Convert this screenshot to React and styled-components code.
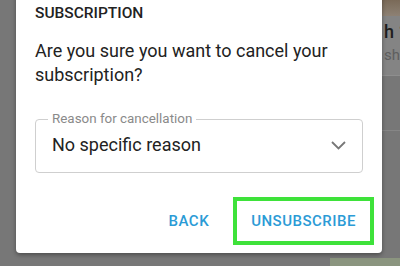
import React from 'react';
import styled, { createGlobalStyle } from 'styled-components';

const GlobalStyle = createGlobalStyle`
  html, body {
    margin: 0;
    padding: 0;
    background: #777777;
  }
  * {
    box-sizing: border-box;
  }
`;

const Screen = styled.div`
  position: relative;
  width: 400px;
  height: 266px;
  overflow: hidden;
  background: #777777;
  font-family: Roboto, 'Liberation Sans', sans-serif;
`;

// dimmed page behind the dialog
const Page = styled.div`
  display: flex;
  flex-direction: column;
  height: 100%;
`;

const PageTop = styled.div`
  flex: 1;
  display: flex;
`;

const Feed = styled.div`
  flex: 1;
`;

const SideList = styled.div`
  width: 18px;
  display: flex;
  flex-direction: column;
  overflow: hidden;
`;

const Thumb = styled.div`
  height: 16px;
  background: linear-gradient(180deg, #7a6a58, #8d8174);
`;

const ItemCard = styled.div`
  height: 60px;
  background: #848484;
  border-bottom: 1px solid #8e8e8e;
  padding: 6px 0 0 2px;
  white-space: nowrap;
`;

const ItemTitle = styled.div`
  font-size: 18px;
  font-weight: 500;
  color: #1e1e1e;
  line-height: 20px;
`;

const ItemSub = styled.div`
  margin-top: 4px;
  font-size: 15px;
  color: #5e5e5e;
  line-height: 18px;
`;

const ItemBlock = styled.div`
  height: 55px;
  border-bottom: 1px solid #868686;
`;

const BottomStrip = styled.div`
  margin-left: 330px;
  height: 8px;
  background: #8b957f;
`;

const Dialog = styled.div`
  position: absolute;
  left: 16px;
  top: -8px;
  width: 366px;
  background: #ffffff;
  border-radius: 4px;
  box-shadow: 0 2px 4px rgba(0, 0, 0, 0.35);
  padding: 11px 0 8px;
`;

const Content = styled.div`
  padding: 0 19px;
`;

const Title = styled.h2`
  margin: 0;
  font-size: 15.5px;
  line-height: 20px;
  font-weight: 500;
  color: #222222;
`;

const Message = styled.p`
  margin: 16px 0 0;
  font-size: 18px;
  line-height: 24px;
  color: #222222;
`;

const Field = styled.fieldset`
  margin: 24px 0 0;
  padding: 0 16px;
  border: 1px solid #cfcfcf;
  border-radius: 4px;
  min-width: 0;
`;

const Legend = styled.legend`
  margin-left: -4px;
  padding: 0 4px;
  font-size: 13.4px;
  line-height: 16px;
  color: #8a8a8a;
`;

const SelectRow = styled.div`
  height: 36px;
  margin-bottom: 9px;
  display: flex;
  align-items: center;
  justify-content: space-between;
`;

const Value = styled.span`
  font-size: 18px;
  line-height: 24px;
  color: #222222;
`;

const Actions = styled.div`
  margin-top: 24px;
  padding: 0 8px;
  display: flex;
  justify-content: flex-end;
  align-items: center;
  gap: ${(p) => p.$gap}px;
`;

const TextButton = styled.button`
  height: 48px;
  padding: 0 ${(p) => (p.$highlight ? '14px' : '8px')};
  background: none;
  border: ${(p) => (p.$highlight ? '4px solid #3ee23a' : 'none')};
  font-family: Roboto, 'Liberation Sans', sans-serif;
  font-size: 15px;
  font-weight: 500;
  letter-spacing: 0.5px;
  color: #2b9bd6;
  cursor: pointer;
`;

const Chevron = () => (
  <svg width="15" height="9" viewBox="0 0 15 9" fill="none">
    <path d="M1 1l6.5 6.5L14 1" stroke="#777777" strokeWidth="1.8" />
  </svg>
);

export default function App() {
  return (
    <Screen>
      <GlobalStyle />
      <Page>
        <PageTop>
          <Feed />
          <SideList>
            <Thumb />
            <ItemCard>
              <ItemTitle>h 1</ItemTitle>
              <ItemSub>shw</ItemSub>
            </ItemCard>
            <ItemBlock />
          </SideList>
        </PageTop>
        <BottomStrip />
      </Page>

      <Dialog>
        <Content>
          <Title>SUBSCRIPTION</Title>
          <Message>Are you sure you want to cancel your subscription?</Message>
          <Field>
            <Legend>Reason for cancellation</Legend>
            <SelectRow>
              <Value>No specific reason</Value>
              <Chevron />
            </SelectRow>
          </Field>
        </Content>
        <Actions $gap={16}>
          <TextButton>BACK</TextButton>
          <TextButton $highlight>UNSUBSCRIBE</TextButton>
        </Actions>
      </Dialog>
    </Screen>
  );
}
